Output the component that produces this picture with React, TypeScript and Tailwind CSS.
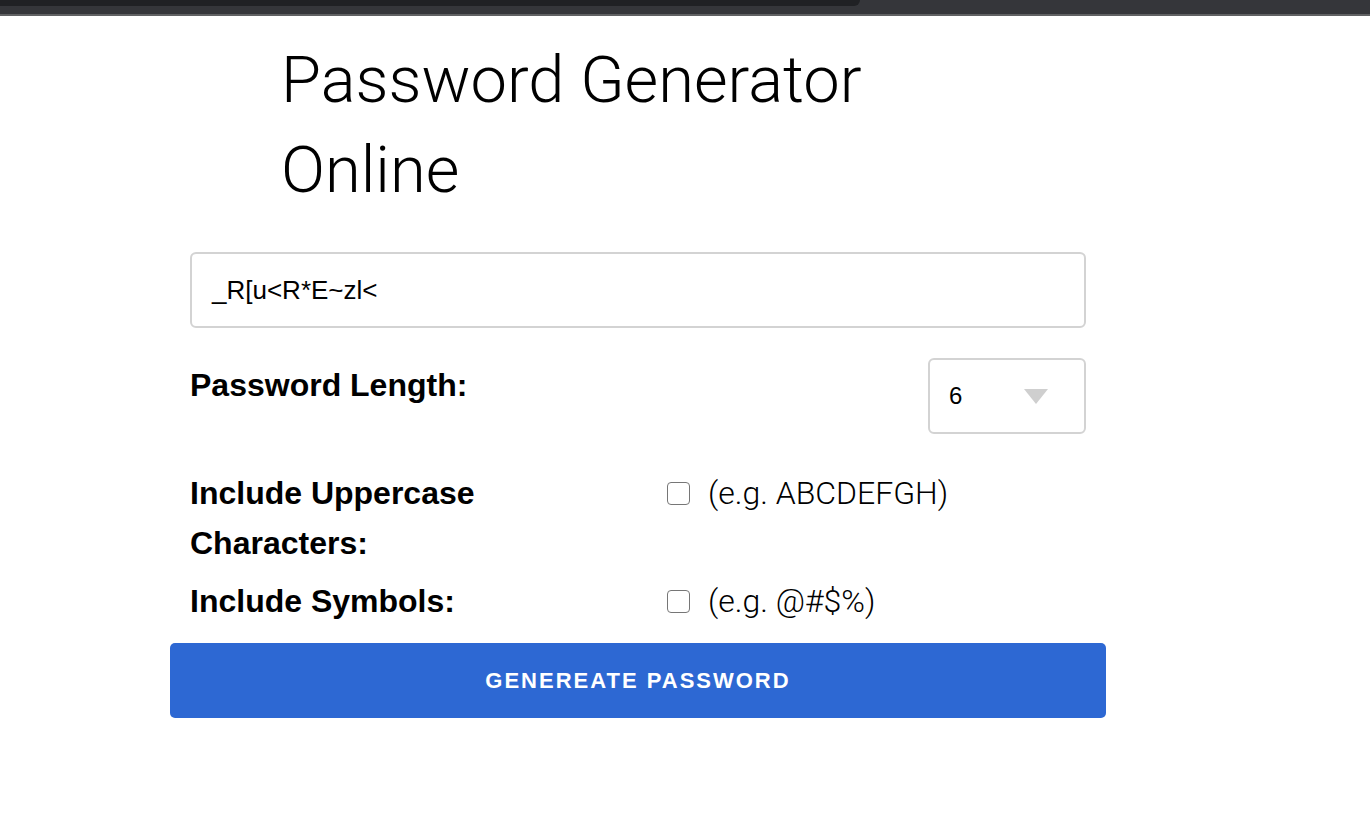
import { useState } from "react";

const sans = "font-['Liberation_Sans',Arial,sans-serif]";
const light = "font-['Roboto','Liberation_Sans',sans-serif] font-light";

const BrowserStrip = () => (
  <div className="flex h-[16px] flex-col border-b-2 border-[#606163] bg-[#35363a]">
    <div className="h-[6px] w-[860px] rounded-br-[6px] bg-[#202124]" />
  </div>
);

const Checkbox = ({ checked, onChange }: { checked: boolean; onChange: () => void }) => (
  <button
    type="button"
    onClick={onChange}
    className="flex h-[23px] w-[23px] items-center justify-center rounded-[4px] border-[1.5px] border-[#767676] bg-white"
  >
    {checked && (
      <svg viewBox="0 0 16 16" className="h-4 w-4">
        <path d="M3 8.5l3 3 7-7" stroke="#333" strokeWidth="2" fill="none" />
      </svg>
    )}
  </button>
);

const OptionRow = ({
  label,
  example,
  checked,
  onChange,
}: {
  label: string;
  example: string;
  checked: boolean;
  onChange: () => void;
}) => (
  <div className="grid grid-cols-[477px_1fr]">
    <span className="pr-[120px] text-[32px] font-bold leading-[50px] text-black">{label}</span>
    <div className="flex h-[50px] items-center">
      <Checkbox checked={checked} onChange={onChange} />
      <span className={`ml-[18px] text-[32px] leading-[50px] text-black ${light}`}>{example}</span>
    </div>
  </div>
);

export default function App() {
  const [upper, setUpper] = useState(false);
  const [symbols, setSymbols] = useState(false);

  return (
    <div className={`min-h-screen bg-white ${sans}`}>
      <BrowserStrip />

      <h1 className={`ml-[281px] mt-[19px] w-[640px] text-[65px] leading-[90px] text-black ${light}`}>
        Password Generator Online
      </h1>

      <div className="ml-[170px] mt-[37px] w-[936px]">
        <div className="px-[20px]">
          <div className="flex h-[76px] items-center rounded-[6px] border-2 border-[#d3d3d3] px-[20px] text-[26px] text-black">
            _R[u&lt;R*E~zl&lt;
          </div>

          <div className="mt-[30px] flex items-start justify-between">
            <span className="mt-[2px] text-[32px] font-bold leading-[50px] text-black">Password Length:</span>
            <div className="flex h-[76px] w-[158px] items-center justify-between rounded-[6px] border-2 border-[#d3d3d3] pl-[19px] pr-[36px]">
              <span className="text-[24px] text-black">6</span>
              <svg width="24" height="15" viewBox="0 0 24 15">
                <path d="M0 0h24L12 15z" fill="#cfcfcf" />
              </svg>
            </div>
          </div>

          <div className="mt-[34px] flex flex-col gap-[8px]">
            <OptionRow
              label="Include Uppercase Characters:"
              example="(e.g. ABCDEFGH)"
              checked={upper}
              onChange={() => setUpper(!upper)}
            />
            <OptionRow
              label="Include Symbols:"
              example="(e.g. @#$%)"
              checked={symbols}
              onChange={() => setSymbols(!symbols)}
            />
          </div>
        </div>

        <button
          type="button"
          className="mt-[17px] flex h-[75px] w-full items-center justify-center rounded-[5px] bg-[#2d68d3] text-[22px] font-bold uppercase tracking-[2px] text-white"
        >
          Genereate Password
        </button>
      </div>
    </div>
  );
}
